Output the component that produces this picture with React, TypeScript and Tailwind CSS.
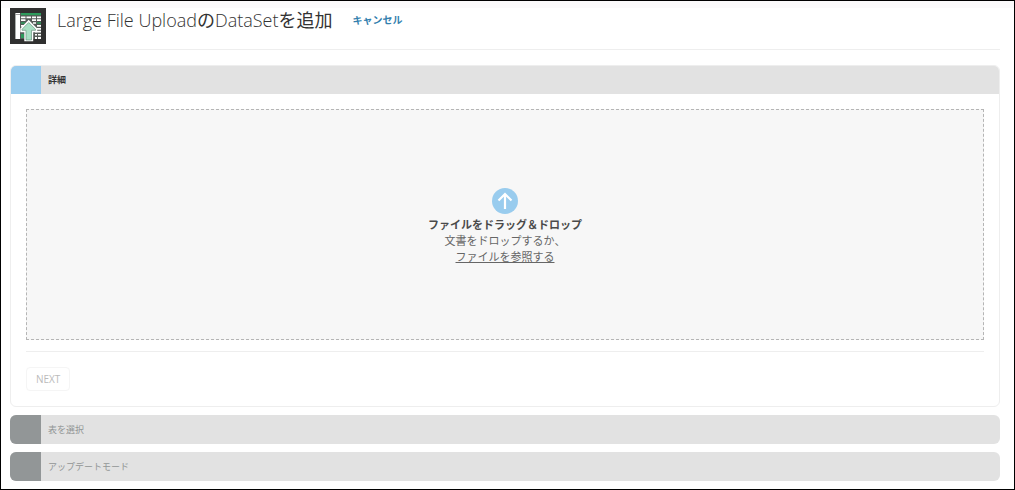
import { useId, useState } from "react";

function DatasetIcon() {
  return (
    <svg viewBox="0 0 36 36" className="size-9 shrink-0" aria-hidden="true">
      <rect width="36" height="36" fill="#303030" />
      <rect x="5" y="5" width="26" height="26" fill="#555c58" />
      <path d="M5.500 5H10v26H5.500z" fill="#fff" />
      <path d="M5.500 6.500H10" stroke="#777" strokeWidth="0.700" />
      <path d="M11 5h20v2.200H11z" fill="#2e9b5c" />
      <path
        d="M11 8.500h4.500v1.800H11zM16.500 8.500h4.500v1.800h-4.500zM22 8.500h4v1.800h-4zM27 8.500h4v1.800h-4zM11 11.300h4.500v1.700H11zM22 11.300h4v1.700h-4zM27 11.300h4v1.700h-4zM11 17h3v1.800h-3zM23 14.200h3v1.600h-3zM27 17h4v1.800h-4zM27 20h4v1.800h-4zM11 20h1v1.800h-1zM25 22.800h6v1.800h-6zM25 26h2v1.500h-2zM28 26h3v1.500h-3zM25 29h2v2h-2zM28 29h3v2h-3z"
        fill="#fff"
      />
      <path d="M11 14.200h4v1.600h-4zM27 14.200h4v1.600h-4zM11 26h3v4h-3z" fill="#2e9b5c" />
      <path
        d="M18.700 13.500 26 21v2h-4v9h-6.500v-9h-4v-2z"
        fill="#a9e0c4"
        stroke="#fff"
        strokeWidth="2.400"
      />
      <path
        d="M18.700 14.500 25.500 21.300v1h-4V32h-5.500v-9.700h-4v-1z"
        fill="#a9e0c4"
        stroke="#6c9883"
        strokeWidth="0.700"
      />
    </svg>
  );
}

function UploadIcon() {
  return (
    <svg viewBox="0 0 26 26" className="size-[26px]" aria-hidden="true">
      <circle cx="13" cy="13" r="13" fill="#99ccee" />
      <path d="M13 21V6M6.500 12.500 13 6l6.500 6.500" fill="none" stroke="#fff" strokeWidth="2.200" />
    </svg>
  );
}

function CollapsedStep({ label }: { label: string }) {
  return (
    <button
      type="button"
      disabled
      className="flex h-[29px] w-full items-stretch overflow-hidden rounded-md bg-[#e2e2e2] text-left text-[9px] text-[#929696]"
    >
      <span className="w-[31px] bg-[#929697]" />
      <span className="self-center pl-[7px]">{label}</span>
    </button>
  );
}

export default function App() {
  const inputId = useId();
  const [ready, setReady] = useState(false);

  return (
    <div className="min-h-screen border border-black bg-white font-['Open_Sans','Noto_Sans_CJK_JP',sans-serif] text-[#4a4a4a]">
      <div className="h-[7px] bg-[#fbfafb]" />
      <main className="pr-3.5 pl-[9px]">
        <header className="flex h-[42px] items-start border-b border-[#eeeeee]">
          <DatasetIcon />
          <h1 className="ml-[11px] text-[18px] leading-6 font-light text-[#333333]">
            Large File Upload<span className="font-normal">の</span>DataSet
            <span className="font-normal">を追加</span>
          </h1>
          <a href="#cancel" className="ml-5 text-[10px] leading-6 font-semibold text-[#3380ae]">
            キャンセル
          </a>
        </header>

        <div className="mt-[15px] flex flex-col gap-2">
          <section className="overflow-hidden rounded-md border border-[#eeeeee]">
            <h2 className="-mx-px -mt-px flex h-[29px] bg-[#e2e2e2] text-[9px] font-bold text-[#333333]">
              <span className="w-[31px] bg-[#99ccee]" />
              <span className="self-center pl-[7px]">詳細</span>
            </h2>
            <div className="p-[15px]">
              <div
                className="flex h-[231px] flex-col items-center justify-center border border-dashed border-[#b5b5b5] bg-[#f7f7f7] pt-[3px] text-[11px] leading-4"
                onDragOver={(e) => e.preventDefault()}
                onDrop={(e) => {
                  e.preventDefault();
                  setReady(e.dataTransfer.files.length > 0);
                }}
              >
                <UploadIcon />
                <strong className="mt-[3px] font-bold">ファイルをドラッグ＆ドロップ</strong>
                <span className="text-[#666666]">文書をドロップするか、</span>
                <label htmlFor={inputId} className="cursor-pointer text-[#666666] underline">
                  ファイルを参照する
                </label>
                <input
                  id={inputId}
                  type="file"
                  className="hidden"
                  onChange={(e) => setReady(!!e.target.files?.length)}
                />
              </div>
              <div className="mt-[11px] border-t border-[#eeeeee] pt-[15px]">
                <button
                  type="button"
                  disabled={!ready}
                  className="flex h-6 items-center rounded-sm border border-[#f5f5f5] px-[9px] text-[10px] text-[#bbbbbb]"
                >
                  NEXT
                </button>
              </div>
            </div>
          </section>
          <CollapsedStep label="表を選択" />
          <CollapsedStep label="アップデートモード" />
        </div>
      </main>
    </div>
  );
}
